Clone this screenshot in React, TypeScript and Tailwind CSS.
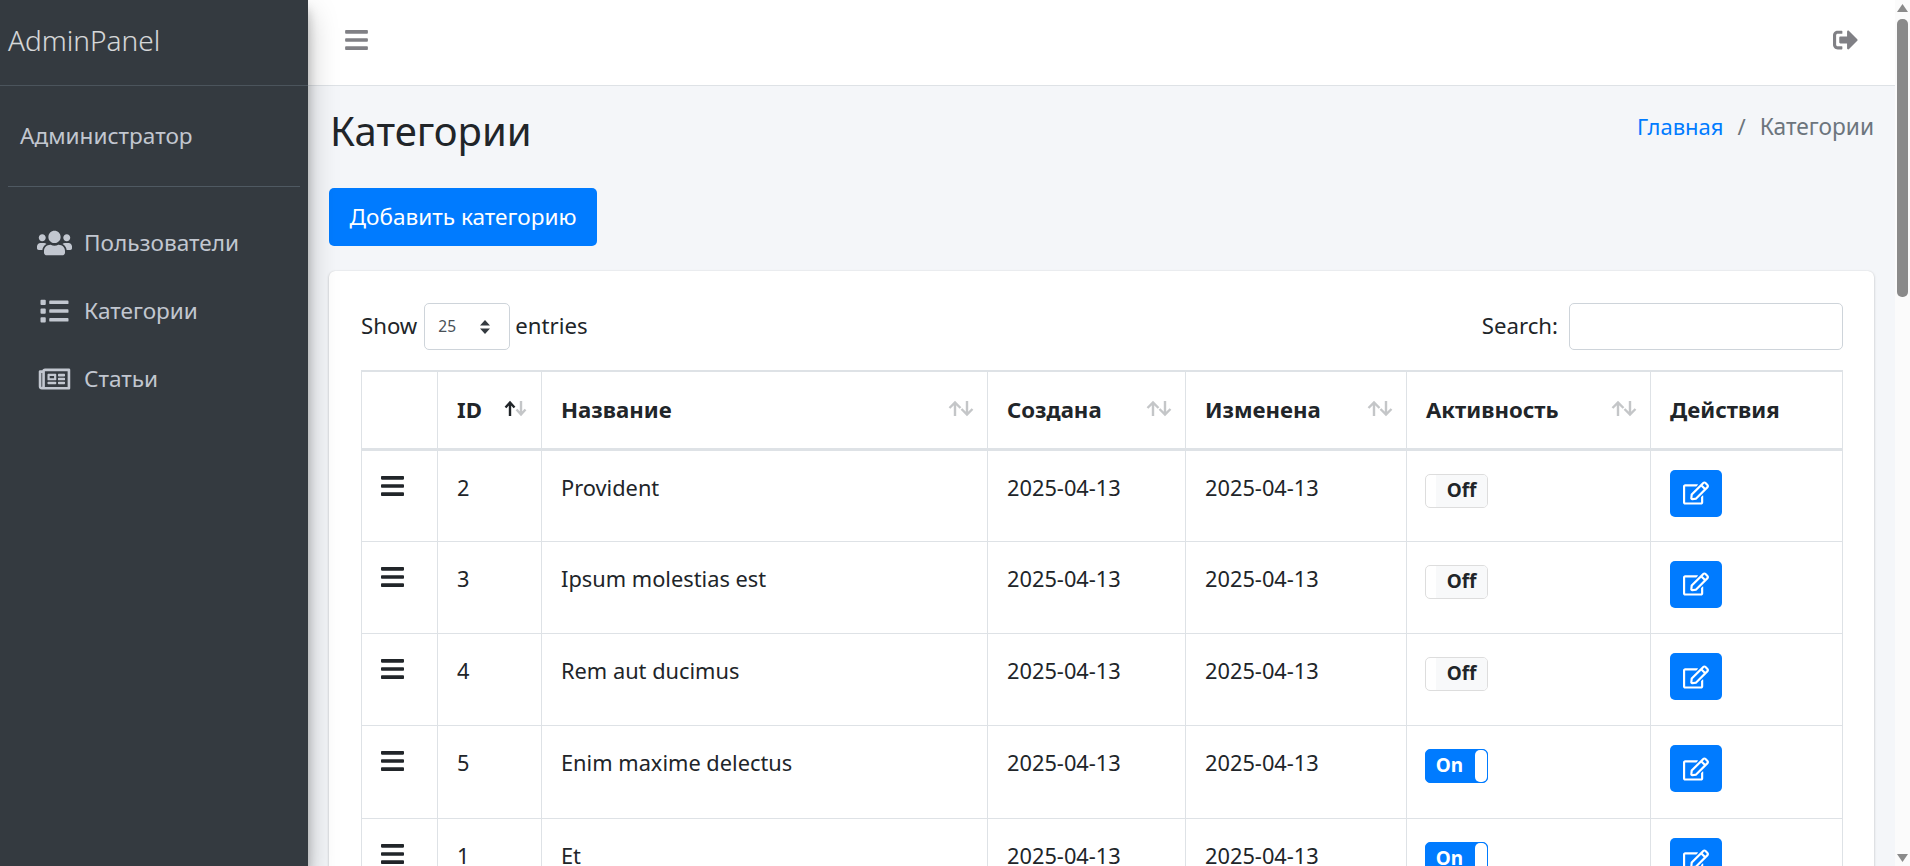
import { FaBars, FaList, FaRegEdit, FaRegNewspaper, FaSignOutAlt, FaUsers } from 'react-icons/fa';

const rows = [
  { id: 2, name: 'Provident', active: false },
  { id: 3, name: 'Ipsum molestias est', active: false },
  { id: 4, name: 'Rem aut ducimus', active: false },
  { id: 5, name: 'Enim maxime delectus', active: true },
  { id: 1, name: 'Et', active: true },
];

const SortArrows = ({ active = false }: { active?: boolean }) =>
  active ? (
    <svg className="absolute right-[13px] top-[27px]" width="26" height="20" viewBox="0 0 26 20" fill="none" strokeWidth="2.4">
      <path d="M8 17V4M3.500 8.500L8 3.500l4.500 5" stroke="#212529" />
      <path d="M19 2v13M14.500 10.500l4.500 5 4.500-5" stroke="#c4c6c8" />
    </svg>
  ) : (
    <svg className="absolute right-[13px] top-[27px]" width="26" height="20" viewBox="0 0 26 20" fill="none" strokeWidth="2.4">
      <path d="M7 17V4M1.500 9L7 3.500 12.500 9" stroke="#c4c6c8" />
      <path d="M19 2v13M13.500 10l5.500 5.500 5.500-5.500" stroke="#c4c6c8" />
    </svg>
  );

const Toggle = ({ on }: { on: boolean }) =>
  on ? (
    <div className="-ml-[1px] mt-[4px] flex h-[34px] w-[63px] overflow-hidden rounded-[5px] border border-[#007bff] bg-[#007bff]">
      <div className="flex-1 pr-[2px] text-center text-[19px] font-bold leading-[30px] text-white">On</div>
      <div className="w-[12px] rounded-[5px] bg-white" />
    </div>
  ) : (
    <div className="-ml-[1px] mt-[4px] flex h-[34px] w-[63px] overflow-hidden rounded-[5px] border border-[#dddddd] bg-white">
      <div className="w-[10px]" />
      <div className="flex-1 bg-[#f8f9fa] text-center text-[19px] font-bold leading-[30px] text-[#212529]">Off</div>
    </div>
  );

const nav = [
  { label: 'Пользователи', icon: FaUsers },
  { label: 'Категории', icon: FaList },
  { label: 'Статьи', icon: FaRegNewspaper },
];

const columns = [
  { label: '', sort: false },
  { label: 'ID', sort: true, active: true },
  { label: 'Название', sort: true },
  { label: 'Создана', sort: true },
  { label: 'Изменена', sort: true },
  { label: 'Активность', sort: true },
  { label: 'Действия', sort: false },
];

export default function App() {
  return (
    <div className="flex h-screen overflow-hidden bg-[#f4f6f9] font-['Noto_Sans',sans-serif] text-[22.2px] text-[#212529]">
      {/* Sidebar */}
      <aside className="relative z-10 w-[308px] shrink-0 bg-[#343a40] shadow-[0_14px_28px_rgba(0,0,0,0.25),0_10px_10px_rgba(0,0,0,0.22)]">
        <div className="h-[86px] border-b border-[#4b545c] pl-[8px] pt-[20px] text-[28px] font-light leading-[40px] text-white/80">AdminPanel</div>
        <div className="mx-[8px] h-[101px] border-b border-[#4f5962] pl-[12px] pt-[34px] text-[22.6px] leading-[32px] text-[#c2c7d0]">Администратор</div>
        <nav className="pt-[22px]">
          {nav.map((item) => (
            <div key={item.label} className="flex h-[68px] items-center pl-[37px] text-[22.6px] text-[#c2c7d0]">
              <span className="flex w-[47px] shrink-0">
                <item.icon className="h-[28px] w-[35px]" />
              </span>
              <span>{item.label}</span>
            </div>
          ))}
        </nav>
      </aside>

      <main className="min-w-0 flex-1">
        <header className="flex h-[86px] items-center justify-between border-b border-[#dee2e6] bg-white pb-[5px] pl-[37px] pr-[37px] text-[#808085]">
          <FaBars className="h-[26px] w-[23px]" />
          <FaSignOutAlt className="h-[26px] w-[25px]" />
        </header>

        <div className="px-[21px]">
          <div className="flex h-[102px] items-center justify-between">
            <h1 className="pb-[12px] pl-[1px] text-[40px] font-normal leading-[54px]">Категории</h1>
            <div className="flex pb-[20px] text-[22px]">
              <span className="text-[#007bff]">Главная</span>
              <span className="px-[14px] text-[#6c757d]">/</span>
              <span className="text-[22.7px] text-[#6c757d]">Категории</span>
            </div>
          </div>

          <button className="h-[58px] w-[268px] rounded-[5px] bg-[#007bff] text-[22.6px] text-white">Добавить категорию</button>

          <section className="mt-[25px] rounded-[6px] bg-white py-[32px] pl-[32px] pr-[31px] shadow-[0_0_1px_rgba(0,0,0,0.13),0_1px_3px_rgba(0,0,0,0.2)]">
            <div className="flex items-start justify-between">
              <div className="flex h-[47px] items-center">
                <span className="pb-[2px]">Show</span>
                <div className="ml-[7px] mr-[5px] flex h-[47px] w-[86px] items-center justify-between rounded-[5px] border border-[#ced4da] pl-[13px] pr-[19px] text-[15.500px] text-[#495057]">
                  <span>25</span>
                  <svg width="10" height="14" viewBox="0 0 10 14" fill="#343a40">
                    <path d="M5 0L10 5.500H0zM5 14L0 8.500h10z" />
                  </svg>
                </div>
                <span className="pb-[2px]">entries</span>
              </div>
              <div className="flex h-[47px] items-center">
                <span className="mr-[11px] pb-[1px]">Search:</span>
                <div className="h-[47px] w-[274px] rounded-[5px] border border-[#ced4da] bg-white" />
              </div>
            </div>

            <table className="mt-[20px] w-[1482px] table-fixed border-collapse">
              <colgroup>
                <col className="w-[76px]" />
                <col className="w-[104px]" />
                <col className="w-[446px]" />
                <col className="w-[198px]" />
                <col className="w-[221px]" />
                <col className="w-[244px]" />
                <col />
              </colgroup>
              <thead>
                <tr className="h-[78px]">
                  {columns.map((col, i) => (
                    <th key={i} className="relative border border-b-[3px] border-t-2 border-[#dee2e6] px-[19px] text-left font-bold">
                      {col.label}
                      {col.sort && <SortArrows active={col.active} />}
                    </th>
                  ))}
                </tr>
              </thead>
              <tbody>
                {rows.map((row) => (
                  <tr key={row.id} className="h-[92.25px]">
                    <td className="border border-[#dee2e6] px-[19px] pt-[19px] align-top">
                      <FaBars className="mt-[2px] h-[28px] w-[23px] text-[#212529]" />
                    </td>
                    <td className="border border-[#dee2e6] px-[19px] pt-[19px] align-top text-[21.8px] leading-[36px]">{row.id}</td>
                    <td className="border border-[#dee2e6] px-[19px] pt-[19px] align-top text-[21.8px] leading-[36px]">{row.name}</td>
                    <td className="border border-[#dee2e6] px-[19px] pt-[19px] align-top text-[21.8px] leading-[36px]">2025-04-13</td>
                    <td className="border border-[#dee2e6] px-[19px] pt-[19px] align-top text-[21.8px] leading-[36px]">2025-04-13</td>
                    <td className="border border-[#dee2e6] px-[19px] pt-[19px] align-top">
                      <Toggle on={row.active} />
                    </td>
                    <td className="border border-[#dee2e6] px-[19px] pt-[19px] align-top">
                      <div className="flex h-[47px] w-[52px] items-center justify-center rounded-[5px] bg-[#007bff] text-white">
                        <FaRegEdit className="h-[24px] w-[26px]" />
                      </div>
                    </td>
                  </tr>
                ))}
              </tbody>
            </table>
          </section>
        </div>
      </main>

      {/* Scrollbar */}
      <div className="flex w-[15px] shrink-0 flex-col items-center bg-[#fbfbfb] pt-[4px] pb-[4px]">
        <svg width="11" height="8" viewBox="0 0 11 8" fill="#8a8a8a"><path d="M5.500 0L11 8H0z" /></svg>
        <div className="mt-[7px] h-[278px] w-[11px] rounded-[5px] bg-[#8a8a8a]" />
        <svg className="mt-auto" width="11" height="8" viewBox="0 0 11 8" fill="#8a8a8a"><path d="M5.500 8L0 0h11z" /></svg>
      </div>
    </div>
  );
}
